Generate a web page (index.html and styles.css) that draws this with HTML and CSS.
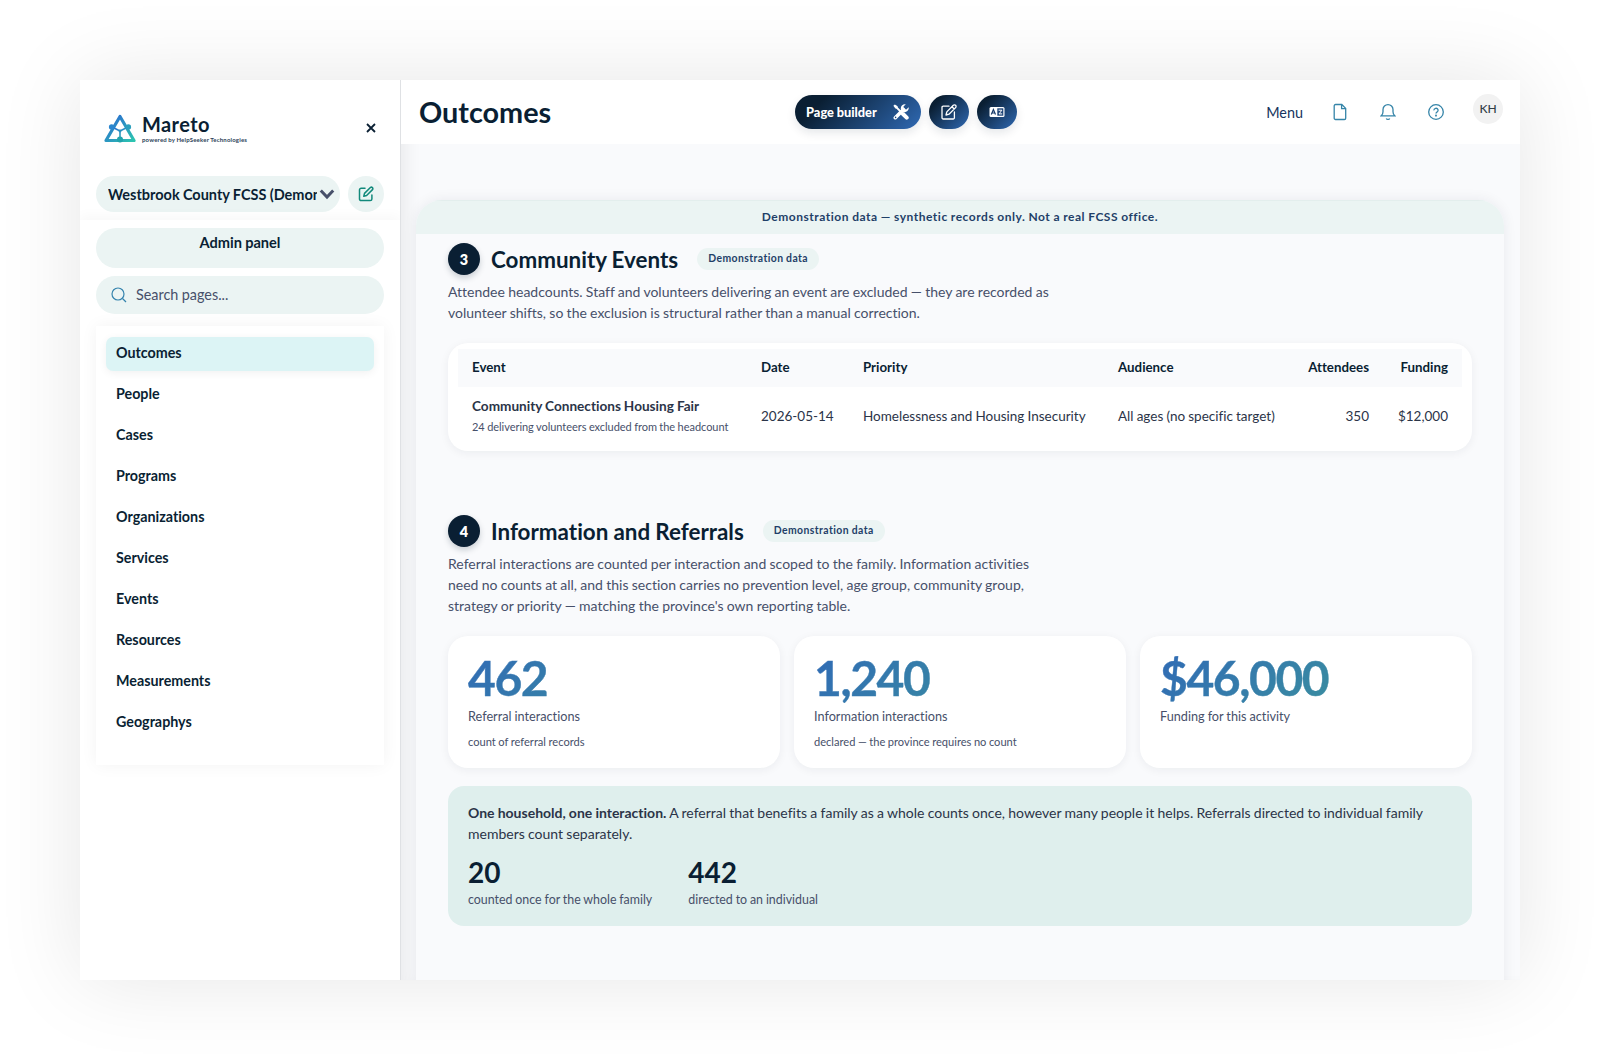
FILE: index.html
```html
<!DOCTYPE html>
<html lang="en">
<head>
  <meta charset="UTF-8">
  <meta name="viewport" content="width=device-width, initial-scale=1.0">
  <title>Outcomes - Mareto</title>
  <link rel="stylesheet" href="styles.css">
</head>
<body>
  <div class="app">
    <aside class="sidebar">
      <div class="sidebar-top">
        <div class="brand-row">
          <div class="brand">
            <svg class="brand-mark" width="32" height="29" viewBox="0 0 32 29">
              <defs>
                <linearGradient id="markFill" x1="0" y1="0" x2="1" y2="1">
                  <stop offset="0.2" stop-color="#2b78cc"/>
                  <stop offset="1" stop-color="#2cc5b0"/>
                </linearGradient>
              </defs>
              <g fill="none" stroke="url(#markFill)" stroke-linejoin="round">
                <path d="M16 2.5 30 26.5H2z" stroke-width="3.2"/>
                <path d="M8 13 16 17l8-4M16 17v9" stroke-width="1.6"/>
              </g>
              <circle cx="7.6" cy="13" r="2.700" fill="#2a86cf"/>
              <circle cx="24.4" cy="13" r="2.700" fill="#2a9fbd"/>
              <circle cx="16" cy="25.5" r="3" fill="#21a3ab"/>
              <circle cx="16" cy="17" r="1.4" fill="#2a94c0"/>
            </svg>
            <div class="brand-text">
              <div class="brand-name">Mareto</div>
              <div class="brand-sub">powered by HelpSeeker Technologies</div>
            </div>
          </div>
          <svg class="close" width="10" height="10" viewBox="0 0 10 10"><path d="M1 1l8 8M9 1L1 9"/></svg>
        </div>
        <div class="org-row">
          <div class="org-select">
            <span class="org-name">Westbrook County FCSS (Demonstration)</span>
            <svg width="16" height="12" viewBox="0 0 16 12"><path d="M1.800 2.500 8 9 14.200 2.500"/></svg>
          </div>
          <div class="org-edit">
            <svg width="16" height="16" viewBox="0 0 16 16"><path d="M7 2.200H3.200A1.700 1.700 0 0 0 1.500 3.900v9A1.700 1.700 0 0 0 3.200 14.600h9a1.700 1.700 0 0 0 1.700-1.700V9M12.400 1.500a1.500 1.500 0 0 1 2.100 2.100L8.600 9.500 5.800 10.300 6.500 7.400z"/></svg>
          </div>
        </div>
      </div>
      <div class="sidebar-body">
        <div class="admin-button">Admin panel</div>
        <div class="search">
          <svg width="16" height="16" viewBox="0 0 16 16"><circle cx="7" cy="7" r="6"/><path d="M11.500 11.500 15 15"/></svg>
          <span>Search pages...</span>
        </div>
        <nav class="nav">
          <a class="nav-item active">Outcomes</a>
          <a class="nav-item">People</a>
          <a class="nav-item">Cases</a>
          <a class="nav-item">Programs</a>
          <a class="nav-item">Organizations</a>
          <a class="nav-item">Services</a>
          <a class="nav-item">Events</a>
          <a class="nav-item">Resources</a>
          <a class="nav-item">Measurements</a>
          <a class="nav-item">Geographys</a>
        </nav>
      </div>
    </aside>

    <div class="main">
      <header class="header">
        <h1>Outcomes</h1>
        <div class="actions">
          <div class="action action-wide">
            <span>Page builder</span>
            <svg width="16" height="16" viewBox="0 0 16 16">
              <path d="M2.200 2.200 8.500 8.500" stroke="#fff" stroke-width="1.800" fill="none"/>
              <path d="M.4 1.800 1.800.4 4.600 2.300V4.400H2.400z" fill="#fff"/>
              <path d="M10 10l3.700 3.700" stroke="#fff" stroke-width="4" stroke-linecap="round" fill="none"/>
              <path d="M2.300 13.700 10.500 5.500" stroke="#fff" stroke-width="3.600" stroke-linecap="round" fill="none"/>
              <path d="M12.800.3A4.200 4.200 0 0 0 8 5.600L10.400 8A4.200 4.200 0 0 0 15.700 3.200L13.300 5.400 10.900 4.900 10.500 2.600z" fill="#fff"/>
              <circle cx="2.600" cy="13.400" r=".8" fill="#1d4477"/>
            </svg>
          </div>
          <div class="action">
            <svg width="16" height="16" viewBox="0 0 16 16" fill="none" stroke="#fff" stroke-width="1.300" stroke-linejoin="round" stroke-linecap="round"><path d="M8 2.200H2.200A1.200 1.200 0 0 0 1 3.400v10.400A1.200 1.200 0 0 0 2.200 15h10a1.200 1.200 0 0 0 1.200-1.200V8M12.300 1.300a1.600 1.600 0 0 1 2.300 2.300L8 10.200 5 11l.8-3.100zM11 2.700 13.200 5"/></svg>
          </div>
          <div class="action">
            <svg width="16" height="12" viewBox="0 0 16 12">
              <rect x=".5" y="1" width="15" height="10" rx="1.500" fill="#fff"/>
              <rect x="8.300" y="2.300" width="6" height="7.400" fill="#1d4477"/>
              <path d="M2.300 8.600 4.400 3.600 6.500 8.600M3 7h2.800" fill="none" stroke="#173a68" stroke-width="1.200"/>
              <path d="M9.600 4.200h3.300L10 7.900h3.200" fill="none" stroke="#fff" stroke-width="1"/>
            </svg>
          </div>
        </div>
        <div class="tools">
          <span class="menu">Menu</span>
          <svg class="tool" width="16" height="18" viewBox="0 0 16 18"><path d="M3.500 1.500h6.300l3.900 3.900v9.800a1.300 1.300 0 0 1-1.300 1.300H3.500a1.300 1.300 0 0 1-1.300-1.300V2.800a1.300 1.300 0 0 1 1.300-1.300zM9.600 1.700v3.900h3.900"/></svg>
          <svg class="tool" width="16" height="18" viewBox="0 0 16 18"><path d="M1.300 12.800h13.400c-1.200-1.100-1.700-2.300-1.700-4V6.600a5 5 0 0 0-10 0v2.200c0 1.700-.5 2.900-1.700 4zM6.300 15.400c.5 1.200 2.900 1.200 3.400 0"/></svg>
          <svg class="tool" width="16" height="18" viewBox="0 0 16 18"><circle cx="8" cy="9" r="7.300"/><path d="M5.900 7.400a2.100 2 0 1 1 3.200 1.600c-.7.500-1.100.7-1.100 1.500"/><circle class="tool-solid" cx="8" cy="12.600" r=".4"/></svg>
          <span class="avatar">KH</span>
        </div>
      </header>

      <div class="panel">
        <div class="notice">Demonstration data — synthetic records only. Not a real FCSS office.</div>

        <section class="section">
          <div class="section-head">
            <span class="step">3</span>
            <h2>Community Events</h2>
            <span class="pill">Demonstration data</span>
          </div>
          <p class="lead">Attendee headcounts. Staff and volunteers delivering an event are excluded — they are recorded as<br>volunteer shifts, so the exclusion is structural rather than a manual correction.</p>
          <div class="table-card">
            <table>
              <colgroup>
                <col class="col-event"><col class="col-date"><col class="col-priority"><col class="col-audience"><col class="col-attendees"><col class="col-funding">
              </colgroup>
              <thead>
                <tr>
                  <th>Event</th>
                  <th>Date</th>
                  <th>Priority</th>
                  <th>Audience</th>
                  <th class="num">Attendees</th>
                  <th class="num">Funding</th>
                </tr>
              </thead>
              <tbody>
                <tr>
                  <td><strong>Community Connections Housing Fair</strong><small>24 delivering volunteers excluded from the headcount</small></td>
                  <td>2026-05-14</td>
                  <td>Homelessness and Housing Insecurity</td>
                  <td>All ages (no specific target)</td>
                  <td class="num">350</td>
                  <td class="num">$12,000</td>
                </tr>
              </tbody>
            </table>
          </div>
        </section>

        <section class="section">
          <div class="section-head">
            <span class="step">4</span>
            <h2>Information and Referrals</h2>
            <span class="pill">Demonstration data</span>
          </div>
          <p class="lead">Referral interactions are counted per interaction and scoped to the family. Information activities<br>need no counts at all, and this section carries no prevention level, age group, community group,<br>strategy or priority — matching the province's own reporting table.</p>
          <div class="stats">
            <div class="stat">
              <div class="stat-value">462</div>
              <div class="stat-label">Referral interactions</div>
              <div class="stat-note">count of referral records</div>
            </div>
            <div class="stat">
              <div class="stat-value">1,240</div>
              <div class="stat-label">Information interactions</div>
              <div class="stat-note">declared — the province requires no count</div>
            </div>
            <div class="stat">
              <div class="stat-value">$46,000</div>
              <div class="stat-label">Funding for this activity</div>
            </div>
          </div>
          <div class="callout">
            <p><strong>One household, one interaction.</strong> A referral that benefits a family as a whole counts once, however many people it helps. Referrals directed to individual family members count separately.</p>
            <div class="splits">
              <div>
                <div class="split-value">20</div>
                <div class="split-label">counted once for the whole family</div>
              </div>
              <div>
                <div class="split-value">442</div>
                <div class="split-label">directed to an individual</div>
              </div>
            </div>
          </div>
        </section>
      </div>
    </div>
  </div>
</body>
</html>
```
FILE: styles.css
```css
* {
  box-sizing: border-box;
}
body {
  margin: 0;
  padding: 80px;
  height: 1060px;
  overflow: hidden;
  background: #fff;
  font-family: Lato, "Open Sans", sans-serif;
  font-variant-ligatures: no-common-ligatures;
  word-spacing: -0.3px;
  color: #0a1f33;
}
h1, h2, p {
  margin: 0;
}
.app {
  display: flex;
  width: 1440px;
  height: 900px;
  background: #f9fafc;
  box-shadow: 0 0 80px rgba(0, 0, 0, 0.1);
}

/* sidebar */
.sidebar {
  width: 321px;
  flex: none;
  background: #fff;
  border-right: 1px solid #dfe1e4;
}
.sidebar-top {
  height: 140px;
  padding: 0 16px;
}
.brand-row {
  display: flex;
  justify-content: space-between;
  align-items: center;
  height: 96px;
  padding: 0 8px 0 8px;
}
.brand {
  display: flex;
  align-items: center;
  gap: 6px;
}
.brand-name {
  font-size: 20px;
  font-weight: 700;
  line-height: 22px;
  letter-spacing: 0.4px;
}
.brand-sub {
  margin-top: 1px;
  font-size: 6px;
  font-weight: 700;
  line-height: 8px;
  letter-spacing: 0.2px;
  white-space: nowrap;
  color: #2c4257;
}
.close {
  fill: none;
  stroke: #0a1f33;
  stroke-width: 1.8;
}
.org-row {
  display: flex;
  gap: 8px;
}
.org-select {
  display: flex;
  align-items: center;
  width: 244px;
  height: 36px;
  padding: 0 5px 0 12px;
  gap: 2px;
  border-radius: 18px;
  background: #ebf4f3;
  font-size: 14.5px;
  font-weight: 700;
}
.org-name {
  width: 209px;
  overflow: hidden;
  white-space: nowrap;
}
.org-select svg {
  flex: none;
  fill: none;
  stroke: #47506a;
  stroke-width: 3;
}
.org-edit {
  display: flex;
  align-items: center;
  justify-content: center;
  width: 36px;
  height: 36px;
  border-radius: 50%;
  background: #ebf4f3;
}
.org-edit svg {
  fill: none;
  stroke: #12897b;
  stroke-width: 1.5;
  stroke-linejoin: round;
  stroke-linecap: round;
}
.sidebar-body {
  padding: 8px 16px 0;
  box-shadow: 0 -4px 12px rgba(0, 0, 0, 0.03);
  clip-path: inset(-16px 0 0 0);
  height: 760px;
}
.admin-button {
  height: 40px;
  border-radius: 20px;
  background: #ebf4f3;
  font-size: 14.6px;
  font-weight: 700;
  line-height: 29px;
  text-align: center;
}
.search {
  display: flex;
  align-items: center;
  gap: 9px;
  height: 38px;
  margin-top: 8px;
  padding: 0 15px;
  border-radius: 19px;
  background: #ebf4f3;
  font-size: 14.4px;
  color: #47506a;
}
.search span {
  margin-top: -1px;
}
.search svg {
  fill: none;
  stroke: #3483ad;
  stroke-width: 1.2;
}
.nav {
  height: 439px;
  margin-top: 12px;
  padding: 11px 10px 0;
  box-shadow: 0 0 16px rgba(0, 0, 0, 0.05);
}
.nav-item {
  display: block;
  height: 34px;
  margin-bottom: 7px;
  padding-left: 10px;
  border-radius: 7px;
  font-size: 14.3px;
  font-weight: 700;
  line-height: 31px;
}
.nav-item.active {
  background: #dcf4f5;
  box-shadow: 0 2px 8px rgba(0, 0, 0, 0.06);
}

/* main column */
.main {
  flex: 1;
  overflow: hidden;
  box-shadow: inset 14px 0 16px -8px rgba(10, 15, 20, 0.06);
}
.header {
  display: grid;
  grid-template-columns: 376px 1fr auto;
  align-items: center;
  height: 64px;
  padding: 0 17px 0 18px;
  background: #fff;
}
.header h1 {
  font-size: 28.8px;
  font-weight: 700;
}
.actions {
  display: flex;
  gap: 8px;
}
.action {
  display: flex;
  align-items: center;
  justify-content: center;
  width: 40px;
  height: 34px;
  border-radius: 17px;
  background: linear-gradient(135deg, #0a1f33 20%, #2f69b3);
  box-shadow: 0 4px 10px rgba(10, 31, 51, 0.1);
}
.action-wide {
  width: 126px;
  justify-content: space-between;
  padding: 0 12px 0 11px;
  color: #fff;
  font-size: 12.8px;
  font-weight: 900;
}
.action-wide span {
  margin-top: -1px;
}
.tools {
  display: flex;
  align-items: center;
}
.menu {
  margin-right: 29px;
  font-size: 14.4px;
  color: #17355e;
}
.tool {
  margin-right: 32px;
  fill: none;
  stroke: #3584a8;
  stroke-width: 1.3;
}
.tool-solid {
  fill: #3584a8;
}
.avatar {
  align-self: flex-start;
  width: 30px;
  height: 30px;
  margin: -6px 0 0 -3px;
  border-radius: 50%;
  background: #f2f2f2;
  color: #333f48;
  font-size: 12px;
  font-weight: 500;
  line-height: 30px;
  text-align: center;
}
.panel {
  height: 900px;
  margin: 56px 16px 0 15px;
  border-radius: 26px 26px 0 0;
  background: #f9fafc;
  box-shadow: 0 0 14px rgba(20, 30, 50, 0.07);
  overflow: hidden;
}
.notice {
  height: 34px;
  border-top: 1px solid #e3eeed;
  background: #ebf4f3;
  color: #1f3f68;
  font-size: 12px;
  font-weight: 700;
  line-height: 31px;
  letter-spacing: 0.52px;
  text-align: center;
}
.section {
  padding: 9px 32px 55px;
}
.section-head {
  display: flex;
  align-items: center;
  height: 32px;
}
.step {
  width: 32px;
  height: 32px;
  border-radius: 50%;
  background: #0a1f33;
  box-shadow: 0 3px 6px rgba(10, 31, 51, 0.2);
  color: #fff;
  font-size: 14.4px;
  font-weight: 800;
  line-height: 33px;
  text-align: center;
}
.section h2 {
  margin-left: 11px;
  padding-top: 2px;
  font-size: 22.4px;
  font-weight: 700;
  line-height: 34px;
}
.pill {
  height: 22px;
  margin-left: 19px;
  padding: 0 11px;
  border-radius: 11px;
  background: #ebf4f3;
  color: #1f3f68;
  font-size: 10.4px;
  font-weight: 700;
  line-height: 20px;
  letter-spacing: 0.43px;
}
.lead {
  margin-top: 6px;
  font-size: 14px;
  line-height: 21px;
  color: #47506a;
}
.table-card {
  height: 108px;
  margin-top: 20px;
  padding: 6px 10px;
  border-radius: 20px;
  background: #fff;
  box-shadow: 0 2px 10px rgba(20, 30, 50, 0.06);
}
table {
  width: 1004px;
  table-layout: fixed;
  border-collapse: collapse;
  font-size: 13.5px;
  color: #2b3448;
}
.col-event {
  width: 289px;
}
.col-date {
  width: 102px;
}
.col-priority {
  width: 255px;
}
.col-audience {
  width: 184px;
}
.col-attendees {
  width: 95px;
}
.col-funding {
  width: 79px;
}
th {
  height: 38px;
  padding: 0 14px 2px;
  background: #f9fafc;
  color: #0a1f33;
  font-size: 13.3px;
  text-align: left;
}
td {
  height: 58px;
  padding: 0 14px;
  white-space: nowrap;
}
td strong, td small {
  display: block;
  line-height: 21px;
}
td strong {
  padding-top: 1px;
  font-size: 13.6px;
  line-height: 20px;
}
td small {
  font-size: 11px;
  letter-spacing: -0.04px;
  color: #47506a;
}
.num {
  text-align: right;
}
.stats {
  display: grid;
  grid-template-columns: repeat(3, 1fr);
  gap: 14px;
  margin-top: 20px;
}
.stat {
  height: 132px;
  padding: 17px 20px;
  border-radius: 20px;
  background: #fff;
  box-shadow: 0 2px 10px rgba(20, 30, 50, 0.06);
  color: #47506a;
}
.stat-value {
  background: linear-gradient(135deg, #306bb5, #3f9f95);
  -webkit-background-clip: text;
  background-clip: text;
  -webkit-text-stroke: 0.4px transparent;
  color: transparent;
  font-size: 48px;
  font-weight: 700;
  line-height: 50px;
  letter-spacing: -1.44px;
}
.stat-label {
  margin-top: 3px;
  font-size: 12.7px;
  line-height: 20px;
}
.stat-note {
  margin-top: 7px;
  font-size: 11.1px;
  line-height: 18px;
}
.callout {
  height: 140px;
  margin-top: 18px;
  padding: 16px 20px;
  border-radius: 16px;
  background: #dfefed;
  color: #2b3448;
  font-size: 14px;
  line-height: 21px;
}
.splits {
  display: flex;
  gap: 36px;
  margin-top: 12px;
}
.split-value {
  color: #0a1f33;
  font-size: 28px;
  font-weight: 700;
  line-height: 32px;
}
.split-label {
  margin-top: 2px;
  font-size: 12.4px;
  line-height: 20px;
  color: #47506a;
}
```
